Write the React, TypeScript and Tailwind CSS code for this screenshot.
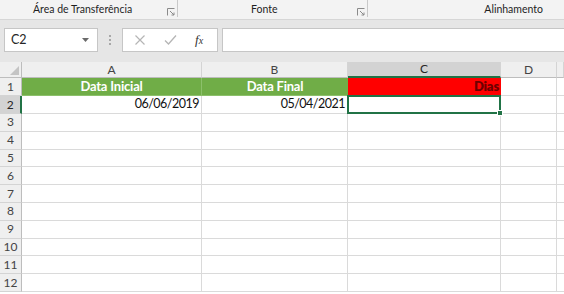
import React from 'react';

const cols = [
  { key: 'A', w: 'w-[180px]' },
  { key: 'B', w: 'w-[146px]' },
  { key: 'C', w: 'w-[153px]' },
  { key: 'D', w: 'w-[56px]' },
  { key: 'E', w: 'flex-1' },
];

function Launcher() {
  return (
    <svg width="8" height="8" viewBox="0 0 8 8" className="shrink-0">
      <path d="M0.5 7.5V0.5H7.5" fill="none" stroke="#8a8a8a" strokeWidth="1" />
      <path d="M3 3L7 7M7 4.5V7H4.5" fill="none" stroke="#8a8a8a" strokeWidth="1" />
    </svg>
  );
}

function RibbonGroup({ label, width, pad }: { label: string; width: string; pad: string }) {
  return (
    <div className={`${width} relative flex items-center h-full ${pad}`}>
      <span className="text-[10.5px] text-[#1f1f1f]">{label}</span>
      <div className="absolute right-[3px] top-[8px]">
        <Launcher />
      </div>
      <div className="absolute right-0 top-0 h-[17px] w-px bg-[#c8c8c8]" />
    </div>
  );
}

function RowHeader({ n, selected }: { n: number; selected?: boolean }) {
  return (
    <div
      className={`w-[22px] shrink-0 flex items-center justify-center text-[12px] border-b border-[#d4d4d4] ${
        selected
          ? 'bg-[#d3d3d3] text-[#262626] border-r-2 border-r-[#217346]'
          : 'bg-[#efefef] text-[#444] border-r border-r-[#bdbdbd]'
      }`}
    >
      {n}
    </div>
  );
}

export default function App() {
  const emptyRows = [3, 4, 5, 6, 7, 8, 9, 10, 11, 12];

  return (
    <div
      className="w-[564px] h-[294px] overflow-hidden bg-[#e6e6e6] flex flex-col"
      style={{ fontFamily: 'Lato, "Liberation Sans", sans-serif' }}
    >
      {/* ribbon group labels */}
      <div className="h-[20px] shrink-0 flex bg-[#f3f3f3] border-b border-[#d6d6d6]">
        <RibbonGroup label="Área de Transferência" width="w-[178px]" pad="pl-[33px]" />
        <RibbonGroup label="Fonte" width="w-[190px]" pad="pl-[73px]" />
        <div className="flex-1 flex items-center justify-end pr-[21px]">
          <span className="text-[10.5px] text-[#1f1f1f]">Alinhamento</span>
        </div>
      </div>

      {/* gray band */}
      <div className="h-[8px] shrink-0 bg-[#e6e6e6]" />

      {/* formula bar */}
      <div className="h-[24px] shrink-0 flex items-stretch">
        <div className="ml-[4px] w-[94px] bg-white border border-[#c6c6c6] flex items-center justify-between pl-[6px] pr-[8px]">
          <span className="text-[12.5px] text-[#262626]">C2</span>
          <svg width="7" height="4" viewBox="0 0 7 4">
            <path d="M0 0H7L3.5 4Z" fill="#6a6a6a" />
          </svg>
        </div>
        <div className="w-[24px] flex flex-col items-center justify-center gap-[2px]">
          <span className="w-[2px] h-[2px] bg-[#a8a8a8]" />
          <span className="w-[2px] h-[2px] bg-[#a8a8a8]" />
          <span className="w-[2px] h-[2px] bg-[#a8a8a8]" />
        </div>
        <div className="w-[96px] bg-white border border-[#c6c6c6] flex items-center">
          <svg width="12" height="12" viewBox="0 0 12 12" className="ml-[11px]">
            <path d="M1.5 1.5L10.5 10.5M10.5 1.5L1.5 10.5" stroke="#b5b5b5" strokeWidth="1.2" />
          </svg>
          <svg width="13" height="12" viewBox="0 0 13 12" className="ml-[18px]">
            <path d="M1 6.5L4.5 10L12 1.5" fill="none" stroke="#b5b5b5" strokeWidth="1.3" />
          </svg>
          <span
            className="ml-[18px] text-[13px] italic text-[#333]"
            style={{ fontFamily: '"Liberation Serif", serif' }}
          >
            f<span className="text-[10px]">x</span>
          </span>
        </div>
        <div className="ml-[4px] flex-1 bg-white border-y border-l border-[#c6c6c6]" />
      </div>

      <div className="h-[10px] shrink-0" />

      {/* sheet */}
      <div className="flex-1 flex flex-col bg-white text-[13px]">
        {/* column headers */}
        <div className="h-[16px] shrink-0 flex bg-[#efefef]">
          <div className="w-[22px] shrink-0 relative border-r border-b border-[#bdbdbd]">
            <svg width="9" height="9" viewBox="0 0 9 9" className="absolute right-[2px] bottom-[2px]">
              <path d="M9 0V9H0Z" fill="#c4c4c4" />
            </svg>
          </div>
          {cols.map((c) => (
            <div
              key={c.key}
              className={`${c.w} shrink-0 flex items-center justify-center text-[12px] border-r border-[#d4d4d4] ${
                c.key === 'C'
                  ? 'bg-[#d3d3d3] text-[#262626] border-b-2 border-b-[#217346]'
                  : 'text-[#444] border-b border-b-[#bdbdbd]'
              }`}
            >
              {c.key === 'E' ? '' : c.key}
            </div>
          ))}
        </div>

        {/* row 1 */}
        <div className="h-[18px] shrink-0 flex">
          <RowHeader n={1} />
          <div className="w-[180px] shrink-0 bg-[#70ad47] border-r border-b border-[#8cc06b] flex items-center justify-center font-bold text-white tracking-[-0.2px]">
            Data Inicial
          </div>
          <div className="w-[146px] shrink-0 bg-[#70ad47] border-b border-[#8cc06b] flex items-center justify-center font-bold text-white tracking-[-0.2px]">
            Data Final
          </div>
          <div className="w-[153px] shrink-0 bg-[#ff0000] border-b border-[#e00000] flex items-center justify-end pr-[2px] font-extrabold text-[#6e0000] tracking-[-0.2px]">
            Dias
          </div>
          <div className="w-[56px] shrink-0 border-r border-b border-[#dadada]" />
          <div className="flex-1 border-b border-[#dadada]" />
        </div>

        {/* row 2 */}
        <div className="h-[18px] shrink-0 flex text-[12.5px] tracking-[-0.5px]">
          <RowHeader n={2} selected />
          <div className="w-[180px] shrink-0 border-r border-b border-[#dadada] flex items-center justify-end pr-[2px] text-[#111]">
            06/06/2019
          </div>
          <div className="w-[146px] shrink-0 border-r border-b border-[#dadada] flex items-center justify-end pr-[2px] text-[#111]">
            05/04/2021
          </div>
          <div className="w-[153px] shrink-0 relative border-r border-b border-[#dadada]">
            <div className="absolute -left-[1px] -top-[1px] -right-[1px] -bottom-[1px] border-2 border-[#217346]" />
            <div className="absolute -right-[3px] -bottom-[3px] w-[6px] h-[6px] bg-[#217346] border border-white" />
          </div>
          <div className="w-[56px] shrink-0 border-r border-b border-[#dadada]" />
          <div className="flex-1 border-b border-[#dadada]" />
        </div>

        {emptyRows.map((n) => (
          <div key={n} className="h-[17.8px] shrink-0 flex">
            <RowHeader n={n} />
            <div className="w-[180px] shrink-0 border-r border-b border-[#dadada]" />
            <div className="w-[146px] shrink-0 border-r border-b border-[#dadada]" />
            <div className="w-[153px] shrink-0 border-r border-b border-[#dadada]" />
            <div className="w-[56px] shrink-0 border-r border-b border-[#dadada]" />
            <div className="flex-1 border-b border-[#dadada]" />
          </div>
        ))}
      </div>
    </div>
  );
}
